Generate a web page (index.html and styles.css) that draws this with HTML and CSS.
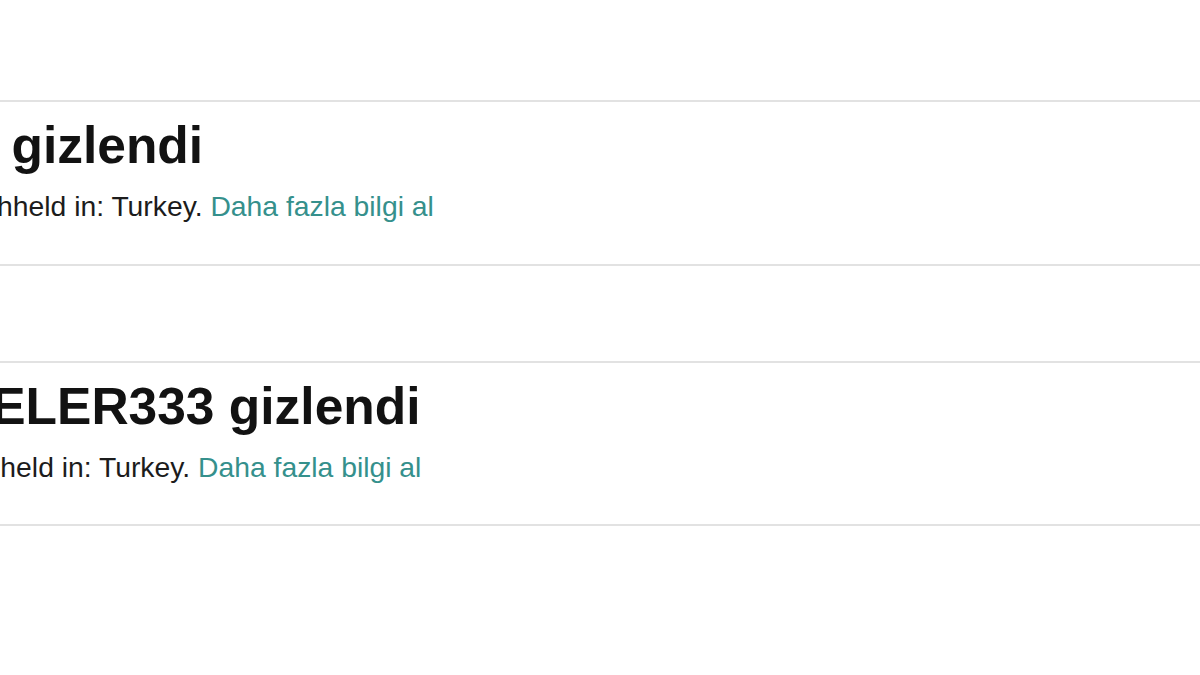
FILE: index.html
```html
<!DOCTYPE html>
<html lang="tr">
<head>
<meta charset="utf-8">
<title>gizlendi</title>
<link rel="stylesheet" href="styles.css">
</head>
<body>
<main class="feed">
  <section class="card">
    <h2 class="title title-a">Tweet gizlendi</h2>
    <p class="note note-a">This Tweet has been withheld in: Turkey. <a class="more" href="#">Daha fazla bilgi al</a></p>
  </section>
  <section class="card">
    <h2 class="title title-b">@TEKELER333 gizlendi</h2>
    <p class="note note-b">@TEKELER333 has been withheld in: Turkey. <a class="more" href="#">Daha fazla bilgi al</a></p>
  </section>
</main>
</body>
</html>
```

FILE: styles.css
```css
html, body {
  margin: 0;
  padding: 0;
  background: #ffffff;
}

body {
  font-family: "Liberation Sans", Arial, sans-serif;
  overflow: hidden;
  width: 1200px;
  height: 675px;
}

.feed {
  padding-top: 100px;
  display: flex;
  flex-direction: column;
  gap: 95px;
}

.card {
  border-top: 2px solid #e2e2e2;
  border-bottom: 2px solid #e2e2e2;
  padding: 14px 0 41px 0;
  overflow: hidden;
}

.title {
  margin: 0;
  font-size: 51.5px;
  font-weight: bold;
  line-height: 59px;
  color: #121212;
  white-space: nowrap;
}

.note {
  margin: 15px 0 0 0;
  font-size: 28.3px;
  line-height: 32.5px;
  color: #1c1c1c;
  white-space: nowrap;
}

.more {
  color: #35908c;
  text-decoration: none;
}

.title-a { margin-left: -145px; }
.note-a { margin-left: -306px; }
.title-b { margin-left: -162px; }
.note-b { margin-left: -387px; }
```
